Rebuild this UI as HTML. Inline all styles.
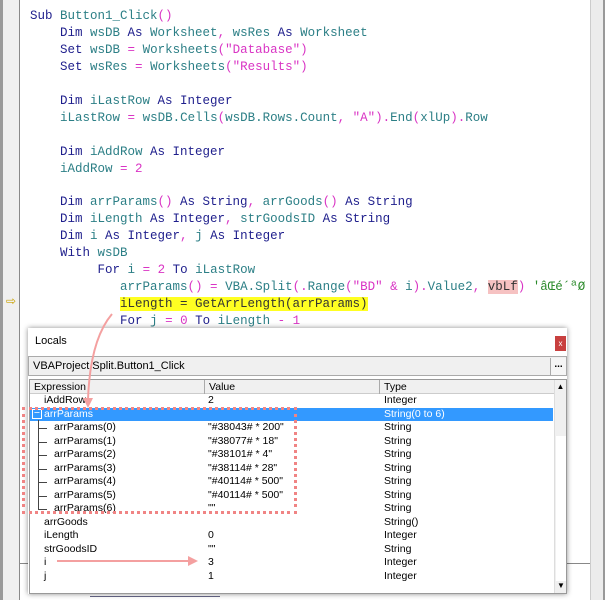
<!DOCTYPE html>
<html><head><meta charset="utf-8"><style>
*{margin:0;padding:0;box-sizing:border-box}
body{width:608px;height:600px;overflow:hidden;background:#fff;position:relative;font-family:"Liberation Sans",sans-serif}
.lstrip{position:absolute;left:0;top:0;width:20px;height:600px;background:#f0f0f0;border-left:3px solid #9a9a9a;border-right:1px solid #8a8a8a}
.rsb{position:absolute;left:590px;top:0;width:15px;height:600px;background:#ececec;border-left:1px solid #ccc;border-right:2px solid #999}
.code{position:absolute;left:30px;top:8px;font-family:"Liberation Mono",monospace;font-size:12.5px;line-height:16.95px;white-space:pre;color:#1e1e8c}
.k{color:#1e1e8c}.v{color:#2c7f86}.s{color:#d934c4}
.hl{background:#ffff22;color:#333}
.pk{background:#f6c2c2;color:#333}
.arrow{position:absolute;left:6px;top:294px;color:#c8a000;font-size:12px}
.win{position:absolute;left:28px;top:328px;width:539px;height:266px;background:#fff;box-shadow:0 0 5px rgba(0,0,0,.45)}
.title{position:absolute;left:7px;top:7px;font-size:11px;color:#000}
.close{position:absolute;left:527px;top:8px;width:11px;height:15px;background:#c8403f;color:#fff;font-size:8px;text-align:center;line-height:15px}
.combo{position:absolute;left:0;top:28px;width:539px;height:20px;border:1px solid #aaa;background:#f0f0f0;font-size:11px;line-height:18px;padding-left:4px}
.combo b{position:absolute;right:0;top:1px;width:16px;height:17px;border-left:1px solid #aaa;font-size:10px;line-height:14px;text-align:center;background:#f5f5f5}
.grid{position:absolute;left:1px;top:51px;width:538px;height:215px;border:1px solid #999;overflow:hidden;font-size:10.5px}
.hdr{position:absolute;left:0;top:0;width:524px;height:14px;background:#f0f0f0;border-bottom:1px solid #ccc}
.hdr span{position:absolute;top:0;line-height:14px;padding-left:4px;border-right:1px solid #aaa;height:14px}
.row{position:absolute;left:0;width:523px;height:13.5px;line-height:13.5px}
.row span{position:absolute;top:0}
.row i{position:absolute;left:8px;top:7px;width:9px;height:1px;background:#444}
.sel{background:#3399ff;color:#fff}
.vsb{position:absolute;left:524px;top:0;width:12px;height:213px;background:#f0f0f0;border-left:1px solid #ddd}
.dash{position:absolute;left:22px;top:407px;width:275px;height:107px;border:3px dotted #f08484}
</style></head><body>
<div class="lstrip"></div>
<div class="rsb"></div>
<div class="code">Sub <span class="v">Button1_Click</span><span class="s">()</span>
    Dim <span class="v">wsDB</span> As <span class="v">Worksheet</span><span class="s">,</span> <span class="v">wsRes</span> As <span class="v">Worksheet</span>
    Set <span class="v">wsDB</span> <span class="s">=</span> <span class="v">Worksheets</span><span class="s">("Database")</span>
    Set <span class="v">wsRes</span> <span class="s">=</span> <span class="v">Worksheets</span><span class="s">("Results")</span>

    Dim <span class="v">iLastRow</span> As Integer
    <span class="v">iLastRow</span> <span class="s">=</span> <span class="v">wsDB.Cells</span><span class="s">(</span><span class="v">wsDB.Rows.Count</span><span class="s">, "A").</span><span class="v">End</span><span class="s">(</span><span class="v">xlUp</span><span class="s">).</span><span class="v">Row</span>

    Dim <span class="v">iAddRow</span> As Integer
    <span class="v">iAddRow</span> <span class="s">= 2</span>

    Dim <span class="v">arrParams</span><span class="s">()</span> As String<span class="s">,</span> <span class="v">arrGoods</span><span class="s">()</span> As String
    Dim <span class="v">iLength</span> As Integer<span class="s">,</span> <span class="v">strGoodsID</span> As String
    Dim <span class="v">i</span> As Integer<span class="s">,</span> <span class="v">j</span> As Integer
    With <span class="v">wsDB</span>
         For <span class="v">i</span> <span class="s">= 2</span> To <span class="v">iLastRow</span>
            <span class="v">arrParams</span><span class="s">() =</span> <span class="v">VBA.Split</span><span class="s">(.</span><span class="v">Range</span><span class="s">("BD" &amp;</span> <span class="v">i</span><span class="s">).</span><span class="v">Value2</span><span class="s">,</span> <span class="pk">vbLf</span><span class="s">)</span> <span style="color:#2a8a2a">'âŒé´ªØ</span>
            <span class="hl">iLength = GetArrLength(arrParams)</span>
            For <span class="v">j</span> <span class="s">= 0</span> To <span class="v">iLength</span> <span class="s">- 1</span></div>
<div class="arrow">⇨</div>
<div style="position:absolute;left:20px;top:563px;width:8px;height:1px;background:#888"></div>
<div style="position:absolute;left:567px;top:563px;width:23px;height:1px;background:#888"></div>
<div style="position:absolute;left:90px;top:596px;width:130px;height:3px;border-top:1px solid #668"></div>
<div class="win">
  <div class="title">Locals</div>
  <div class="close">x</div>
  <div class="combo">VBAProject.Split.Button1_Click<b>...</b></div>
  <div class="grid">
    <div class="hdr"><span style="left:0;width:175px">Expression</span><span style="left:175px;width:175px">Value</span><span style="left:350px;width:175px;border:none">Type</span></div>
    <div class="row" style="top:14px"><span style="left:14px">iAddRow</span><span style="left:178px">2</span><span style="left:354px">Integer</span></div>
    <div class="row sel" style="top:27.5px"><span style="left:2px;top:1px;width:10px;height:10px;border:1px solid #fff;background:#3399ff;line-height:7px;text-align:center">−</span><span style="left:14px">arrParams</span><span style="left:354px">String(0 to 6)</span></div>
    <div class="row" style="top:41px"><i></i><span style="left:24px">arrParams(0)</span><span style="left:178px">"#38043# * 200"</span><span style="left:354px">String</span></div>
    <div class="row" style="top:54.5px"><i></i><span style="left:24px">arrParams(1)</span><span style="left:178px">"#38077# * 18"</span><span style="left:354px">String</span></div>
    <div class="row" style="top:68px"><i></i><span style="left:24px">arrParams(2)</span><span style="left:178px">"#38101# * 4"</span><span style="left:354px">String</span></div>
    <div class="row" style="top:81.5px"><i></i><span style="left:24px">arrParams(3)</span><span style="left:178px">"#38114# * 28"</span><span style="left:354px">String</span></div>
    <div class="row" style="top:95px"><i></i><span style="left:24px">arrParams(4)</span><span style="left:178px">"#40114# * 500"</span><span style="left:354px">String</span></div>
    <div class="row" style="top:108.5px"><i></i><span style="left:24px">arrParams(5)</span><span style="left:178px">"#40114# * 500"</span><span style="left:354px">String</span></div>
    <div class="row" style="top:122px"><i></i><span style="left:24px">arrParams(6)</span><span style="left:178px">""</span><span style="left:354px">String</span></div>
    <div class="row" style="top:135.5px"><span style="left:14px">arrGoods</span><span style="left:354px">String()</span></div>
    <div class="row" style="top:149px"><span style="left:14px">iLength</span><span style="left:178px">0</span><span style="left:354px">Integer</span></div>
    <div class="row" style="top:162.5px"><span style="left:14px">strGoodsID</span><span style="left:178px">""</span><span style="left:354px">String</span></div>
    <div class="row" style="top:176px"><span style="left:14px">i</span><span style="left:178px">3</span><span style="left:354px">Integer</span></div>
    <div class="row" style="top:189.5px"><span style="left:14px">j</span><span style="left:178px">1</span><span style="left:354px">Integer</span></div>
    <div style="position:absolute;left:8px;top:40px;width:1px;height:89px;background:#444"></div>
    <div class="vsb"><div style="text-align:center;font-size:8px;line-height:14px">▲</div><div style="position:absolute;bottom:0;width:12px;text-align:center;font-size:8px;line-height:14px">▼</div><div style="position:absolute;top:56px;left:1px;width:10px;height:145px;background:#fff"></div></div>
  </div>
</div>
<div class="dash"></div>
<svg style="position:absolute;left:0;top:0" width="608" height="600">
  <path d="M112,314 Q90,340 88,400" stroke="#f4a0a0" stroke-width="2" fill="none"/>
  <polygon points="83,398 93,398 88,408" fill="#f4a0a0"/>
  <line x1="57" y1="561" x2="190" y2="561" stroke="#f4a0a0" stroke-width="2"/>
  <polygon points="188,556 198,561 188,566" fill="#f4a0a0"/>
</svg>
</body></html>
